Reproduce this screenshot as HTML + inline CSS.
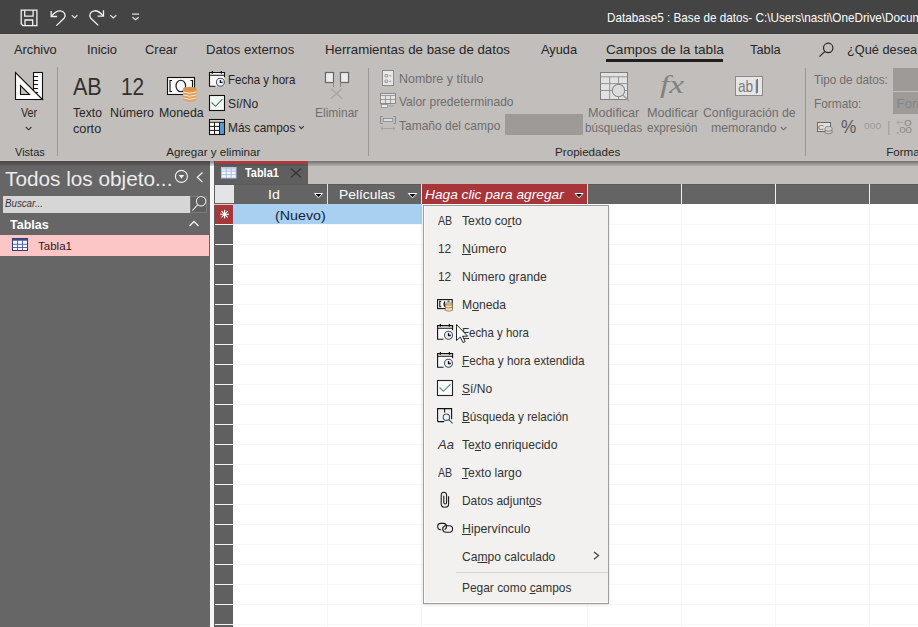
<!DOCTYPE html>
<html><head><meta charset="utf-8">
<style>
html,body{margin:0;padding:0;width:918px;height:627px;overflow:hidden;background:#ffffff;font-family:"Liberation Sans",sans-serif;}
.a{position:absolute;}
.t{position:absolute;white-space:nowrap;line-height:1;transform-origin:0 0;}
.t u{text-decoration:underline;text-decoration-thickness:1px;text-underline-offset:0.5px;}
svg{position:absolute;overflow:visible;}
</style></head><body>
<!-- title bar -->
<div class="a" style="left:0;top:0;width:918px;height:34px;background:#444444"></div>
<div class="a" style="left:0;top:33px;width:918px;height:1px;background:#3b3a38"></div>
<!-- ribbon -->
<div class="a" style="left:0;top:34px;width:918px;height:127px;background:#c2bebb"></div>
<div class="a" style="left:0;top:34px;width:918px;height:1px;background:#cbc8c5"></div>
<div class="a" style="left:606px;top:59px;width:117px;height:3px;background:#1f1f1f"></div>
<!-- ribbon separators -->
<div class="a" style="left:57px;top:67px;width:1px;height:89px;background:#9a9896"></div>
<div class="a" style="left:368px;top:68px;width:1px;height:88px;background:#9a9896"></div>
<div class="a" style="left:805px;top:68px;width:1px;height:88px;background:#9a9896"></div>
<div class="a" style="left:888px;top:121px;width:1px;height:14px;background:#a8a6a4"></div>
<!-- grey boxes -->
<div class="a" style="left:505px;top:114px;width:78px;height:21px;background:#9d9a98"></div>
<div class="a" style="left:893px;top:68px;width:25px;height:23px;background:#9d9a98"></div>
<div class="a" style="left:893px;top:92px;width:25px;height:22px;background:#9d9a98"></div>
<!-- ribbon bottom edge -->
<div class="a" style="left:0;top:160px;width:918px;height:1px;background:#c6c3c0"></div>

<!-- nav pane -->
<div class="a" style="left:0;top:161px;width:210px;height:466px;background:#666666"></div>
<div class="a" style="left:3px;top:196px;width:187px;height:17px;background:#d6d6d6"></div>
<div class="a" style="left:190px;top:196px;width:17px;height:17px;background:#606060;box-sizing:border-box;border:1px solid #7a7a7a"></div>
<div class="a" style="left:0;top:235px;width:209px;height:21px;background:#fcc6c6"></div>
<!-- strip -->
<div class="a" style="left:210px;top:161px;width:4px;height:466px;background:#f6f6f6"></div>
<div class="a" style="left:214px;top:161px;width:1px;height:466px;background:#606060"></div>
<!-- tab strip -->
<div class="a" style="left:215px;top:161px;width:703px;height:23px;background:#c2bebb"></div>
<div class="a" style="left:215px;top:161px;width:93px;height:23px;background:#5f5f5f"></div>
<div class="a" style="left:215px;top:161px;width:93px;height:3px;background:#a4373a"></div>

<!-- datasheet -->
<div class="a" style="left:215px;top:184px;width:703px;height:20px;background:#646464"></div>
<div class="a" style="left:215px;top:184px;width:703px;height:1px;background:#5a5a5a"></div>
<div class="a" style="left:215px;top:185px;width:19px;height:18px;background:#e4e4e6"></div>
<div class="a" style="left:422px;top:184px;width:165px;height:20px;background:#a8353a"></div>
<div class="a" style="left:327px;top:184px;width:1px;height:20px;background:#e0e0e0"></div>
<div class="a" style="left:421px;top:184px;width:1px;height:20px;background:#e0e0e0"></div>
<div class="a" style="left:587px;top:184px;width:1px;height:20px;background:#f4e4e4"></div>
<div class="a" style="left:681px;top:184px;width:1px;height:20px;background:#f0f0f0"></div>
<div class="a" style="left:775px;top:184px;width:1px;height:20px;background:#f0f0f0"></div>
<div class="a" style="left:869px;top:184px;width:1px;height:20px;background:#f0f0f0"></div>
<!-- row selectors -->
<div class="a" style="left:215px;top:205px;width:18px;height:422px;background:repeating-linear-gradient(to bottom,#606060 0,#606060 19px,#f4f4f4 19px,#f4f4f4 20px)"></div>
<div class="a" style="left:214px;top:204px;width:19px;height:1px;background:#e6c2c2"></div>
<div class="a" style="left:215px;top:205px;width:18px;height:19px;background:#a4373a"></div>
<!-- body grid -->
<div class="a" style="left:233px;top:205px;width:685px;height:422px;background:repeating-linear-gradient(to bottom,transparent 0,transparent 19px,#f7f7f7 19px,#f7f7f7 20px)"></div>
<div class="a" style="left:327px;top:204px;width:1px;height:423px;background:#f7f7f7"></div>
<div class="a" style="left:421px;top:204px;width:1px;height:423px;background:#f7f7f7"></div>
<div class="a" style="left:587px;top:204px;width:1px;height:423px;background:#f7f7f7"></div>
<div class="a" style="left:681px;top:204px;width:1px;height:423px;background:#f7f7f7"></div>
<div class="a" style="left:775px;top:204px;width:1px;height:423px;background:#f7f7f7"></div>
<div class="a" style="left:869px;top:204px;width:1px;height:423px;background:#f7f7f7"></div>
<div class="a" style="left:233px;top:204px;width:189px;height:20px;background:#a9cff1"></div>

<!-- menu -->
<div class="a" style="left:423px;top:205px;width:186px;height:399px;box-sizing:border-box;background:#f2f1f0;border:1px solid #9e9e9e;box-shadow:inset 1px -1px 0 #fafafa, 0 1px 3px rgba(0,0,0,0.12)"></div>
<div class="a" style="left:456px;top:572px;width:152px;height:1px;background:#d4d4d4"></div>

<div class="a" style="left:0;top:161px;width:918px;height:5px;background:linear-gradient(to bottom,rgba(50,45,42,0.55),rgba(50,45,42,0.1))"></div>
<div class="a" style="left:215px;top:161px;width:93px;height:3px;background:#ad3a3e"></div>
<svg style="left:0;top:0" width="918" height="627" viewBox="0 0 918 627" fill="none">
<!-- title bar icons -->
<g stroke="#f2f2f2" stroke-width="1.3" fill="none" stroke-linejoin="miter">
  <path d="M21.2,10.2 H36.9 V25.6 H23 L21.2,23.8 Z"/>
  <path d="M24.7,10.2 V16.2 H33.1 V10.2"/>
  <path d="M25,25.6 V20 H32.7 V25.6"/>
  <path d="M51.2,10.9 V16.5 H57.1"/>
  <path d="M51.6,16.1 C54.5,12.5 57,10.6 60.5,10.9 C64.5,11.3 66.2,15 64.3,18 L56.4,25.6"/>
  <path d="M103.5,10.2 V16.2 H97.6"/>
  <path d="M103.1,15.8 C100.2,12.3 97.7,10.5 94.3,10.8 C90.3,11.2 88.7,15 90.6,18 L98.3,25.4"/>
</g>
<g stroke="#e6e6e6" stroke-width="1.2" fill="none">
  <path d="M71.8,15.1 L74.6,17.9 L77.4,15.1"/>
  <path d="M110.2,15.1 L113.3,17.9 L116.4,15.1"/>
  <path d="M132.1,14.1 H139.1"/>
  <path d="M132.5,17.2 L135.6,19.8 L138.7,17.2"/>
</g>
<!-- search icon tab row -->
<g stroke="#262626" stroke-width="1.2" fill="none">
  <circle cx="828.2" cy="47.9" r="4.7"/>
  <path d="M824.9,51.3 L819.5,56.7"/>
</g>
<!-- Ver icon -->
<g stroke="#111" stroke-width="1.1" fill="#fafafa">
  <rect x="33.5" y="72.5" width="9" height="27"/>
  <path d="M33.5,76.5 H38 M33.5,80.5 H38 M33.5,84.5 H38 M33.5,88.5 H38 M33.5,92.5 H38"/>
  <path d="M15.5,72.5 V99.5 H42.5 Z"/>
  <path d="M20.5,85.5 V94.5 H29.5 Z" fill="#c2bebb"/>
</g>
<path d="M25.8,127 L28.6,129.8 L31.4,127" stroke="#333" stroke-width="1.1" fill="none"/>
<!-- Moneda icon -->
<g stroke="#111" stroke-width="1.1">
  <rect x="167.5" y="77.5" width="27" height="17" fill="#fafafa"/>
  <path d="M172,80.5 H170 V91.5 H172 M190.5,80.5 H192.5 V91.5 H190.5" fill="none"/>
  <ellipse cx="180.8" cy="86" rx="4.8" ry="5.8" fill="none"/>
</g>
<g>
  <rect x="183" y="89" width="13.6" height="10.5" fill="#e0a060"/>
  <ellipse cx="189.8" cy="99.5" rx="6.8" ry="2" fill="#e0a060"/>
  <ellipse cx="189.8" cy="89" rx="6.8" ry="2.3" fill="#d8944c"/>
  <path d="M183.3,92 Q189.8,94.6 196.3,92 M183.3,95 Q189.8,97.6 196.3,95 M183.3,98 Q189.8,100.6 196.3,98" stroke="#fbeede" stroke-width="0.9" fill="none"/>
</g>
<!-- Fecha y hora -->
<rect x="209.5" y="72.5" width="15" height="13.7" fill="#fafafa"/>
<path d="M215.4,86.2 H209.5 V72.5 H224.5 V77.2 M209.5,75.2 H224.5" stroke="#111" stroke-width="1.1" fill="none"/>
<path d="M212.3,70.9 V73.7 M221.3,70.9 V73.7" stroke="#111" stroke-width="1.2"/>
<circle cx="220.4" cy="82.2" r="4" fill="#eef4fb" stroke="#4a5260" stroke-width="1.1"/>
<path d="M220.4,79.9 V82.4 H222.7" stroke="#111" stroke-width="1.3" fill="none"/>
<!-- Si/No -->
<rect x="209.5" y="95.5" width="15" height="15" fill="#f2f9f5" stroke="#111" stroke-width="1.1"/>
<path d="M211.6,102.5 L215.4,106.3 L222.5,99.2" stroke="#4a7564" stroke-width="1.1" fill="none"/>
<!-- Mas campos -->
<rect x="209.5" y="119.5" width="15" height="15" fill="#fafafa"/>
<rect x="209.5" y="119.5" width="15" height="2.8" fill="#dcdcdc"/>
<rect x="219.5" y="122.3" width="5" height="12.2" fill="#5b9bd5"/>
<path d="M209.5,122.3 H224.5 M209.5,126.4 H219.5 M209.5,130.4 H219.5 M214.5,122.3 V134.5 M219.5,122.3 V134.5" stroke="#1a1a1a" stroke-width="1"/>
<rect x="209.5" y="119.5" width="15" height="15" fill="none" stroke="#111" stroke-width="1.1"/>
<path d="M299,126.2 L301.4,128.6 L303.8,126.2" stroke="#333" stroke-width="1.1" fill="none"/>
<!-- Eliminar -->
<g stroke="#666666" stroke-width="1.2" fill="#ececec">
  <rect x="325.5" y="72.5" width="8" height="10"/>
  <rect x="340.5" y="72.5" width="8" height="10"/>
</g>
<path d="M333.5,82 V87 M340.5,82 V87" stroke="#8a8a8a" stroke-width="1"/>
<path d="M331,88.5 L342,98.5 M342,88.5 L331,98.5" stroke="#a5a5a5" stroke-width="1.1"/>
<!-- Nombre y titulo -->
<rect x="382.5" y="70.5" width="11" height="15" fill="#e8e8e8" stroke="#8a8a8a" stroke-width="1"/>
<path d="M385,74.5 h2.5 v2.5 h-2.5 z M385,80 h2.5 v2.5 h-2.5 z M388.8,75.8 h2.6 M388.8,81.3 h2.6" stroke="#8a8a8a" stroke-width="0.8" fill="none"/>
<!-- Valor predeterminado -->
<rect x="380.5" y="93.5" width="15" height="10" fill="#e4e4e4" stroke="#8a8a8a" stroke-width="1"/>
<path d="M380.5,95.5 H395.5 M380.5,99.5 H395.5 M385.5,95.5 V103.5 M390.5,95.5 V103.5" stroke="#8a8a8a" stroke-width="0.8"/>
<rect x="381.5" y="104.5" width="6" height="3" fill="#ececec" stroke="#8a8a8a" stroke-width="0.8"/>
<path d="M389,106 H394" stroke="#9a9a9a" stroke-width="0.8"/>
<!-- Tamano del campo -->
<path d="M382.5,116.5 H380.5 V123.5 H382.5 M393.5,116.5 H395.5 V123.5 H393.5" stroke="#8a8a8a" stroke-width="1" fill="none"/>
<rect x="383.5" y="118.5" width="9" height="3" fill="#dcdcdc" stroke="#8a8a8a" stroke-width="0.8"/>
<path d="M381,128.5 H395 M383,126.8 L381,128.5 L383,130.2 M393,126.8 L395,128.5 L393,130.2" stroke="#9a9a9a" stroke-width="0.8" fill="none"/>
<!-- Modificar busquedas -->
<rect x="600.5" y="72.5" width="27" height="27" fill="#e2e2e2" stroke="#7f7f7f" stroke-width="1"/>
<path d="M600.5,76.8 H627.5 M600.5,83.6 H627.5 M600.5,90.5 H627.5 M609.7,76.8 V99.5 M618.5,76.8 V99.5" stroke="#8a8a8a" stroke-width="0.9"/>
<circle cx="618.5" cy="90.5" r="6.2" fill="#dcdcdc" stroke="#8a8a8a" stroke-width="1.1"/>
<path d="M622.8,95 L629,101" stroke="#9a9a9a" stroke-width="1.4"/>
<!-- abl -->
<rect x="735.5" y="76.5" width="27" height="19" fill="#e6e6e6" stroke="#8a8a8a" stroke-width="1"/>
<path d="M757.5,79 V93" stroke="#777" stroke-width="1"/>
<!-- Formato icons -->
<rect x="817.5" y="122.5" width="13" height="9" fill="#e0e0e0" stroke="#666" stroke-width="1"/>
<ellipse cx="828.5" cy="128" rx="3.5" ry="1.6" fill="#cfcfcf" stroke="#777" stroke-width="0.8"/>
<rect x="825" y="128" width="7" height="5" fill="#cfcfcf"/>
<path d="M825,128 V133 M832,128 V133 M825,130.5 Q828.5,132 832,130.5 M825,133 Q828.5,134.5 832,133" stroke="#777" stroke-width="0.8" fill="none"/>
<path d="M889,121 V135" stroke="#a8a6a4" stroke-width="1"/>
<!-- nav pane icons -->
<circle cx="181.4" cy="176.4" r="6" stroke="#f2f2f2" stroke-width="1.1" fill="none"/>
<path d="M178.6,175 H184.3 L181.45,178.4 Z" fill="#f2f2f2"/>
<path d="M202.5,172.5 L197.3,177.3 L202.5,182.1" stroke="#f2f2f2" stroke-width="1.2" fill="none"/>
<circle cx="201.1" cy="201.2" r="4.7" stroke="#e0e0e0" stroke-width="1.1" fill="none"/>
<path d="M197.8,204.6 L192.4,210.6" stroke="#e0e0e0" stroke-width="1.2"/>
<path d="M189.5,226 L194,221.5 L198.5,226" stroke="#f2f2f2" stroke-width="1.3" fill="none"/>
<!-- nav table icon -->
<rect x="12.5" y="238.5" width="15" height="12" fill="#f4f6ff" stroke="#2e3a6e" stroke-width="1"/>
<rect x="12.5" y="238.5" width="15" height="2.2" fill="#3a4a86"/>
<path d="M12.5,244.3 H27.5 M12.5,247.5 H27.5 M17.5,240.5 V250.5 M22.5,240.5 V250.5" stroke="#4a5aa0" stroke-width="0.9"/>
<!-- tab icon -->
<rect x="221.5" y="167.5" width="14.5" height="10.5" fill="#f4f6fc" stroke="#b4c2e6" stroke-width="1"/>
<rect x="221.5" y="167.5" width="14.5" height="2" fill="#c4d0ee"/>
<path d="M221.5,171.2 H236 M221.5,174.6 H236 M226.3,167.5 V178 M231.2,167.5 V178" stroke="#a8b8e0" stroke-width="0.9"/>
<path d="M291,168.5 L301,177.5 M301,168.5 L291,177.5" stroke="#333" stroke-width="1.1"/>
<!-- header triangles -->
<path d="M314.5,193.5 H322.5 L318.5,197.8 Z" fill="#111" stroke="#fff" stroke-width="1"/>
<path d="M408.3,193.5 H416.8 L412.5,197.8 Z" fill="#111" stroke="#fff" stroke-width="1"/>
<path d="M575,193.5 H583 L579,197.8 Z" fill="#111" stroke="#fff" stroke-width="1"/>
<!-- asterisk -->
<path d="M224.6,209.8 V218.6 M220.2,214.2 H229 M221.5,211.1 L227.7,217.3 M227.7,211.1 L221.5,217.3" stroke="#fff" stroke-width="1.1"/>
<!-- menu icons -->
<rect x="437.6" y="299.6" width="14.6" height="9" fill="#fafafa" stroke="#111" stroke-width="1.1"/>
<path d="M441.3,301.3 H439.8 V306.8 H441.3" stroke="#111" stroke-width="1.1" fill="none"/>
<path d="M445,301.3 Q443,304 445,306.8" stroke="#111" stroke-width="1.1" fill="none"/>
<path d="M447.5,301.2 H449.5" stroke="#111" stroke-width="1"/>
<rect x="445.4" y="303.8" width="7" height="7.2" fill="#f6e4bc"/>
<ellipse cx="448.9" cy="304" rx="3.5" ry="1.1" fill="#f6e4bc" stroke="#8f6c3a" stroke-width="0.9"/>
<path d="M445.4,304 V310.4 Q448.9,312 452.4,310.4 V304 M445.4,307.2 Q448.9,308.8 452.4,307.2" stroke="#8f6c3a" stroke-width="0.8" fill="none"/>
<!-- menu calendars -->
<rect x="437.6" y="325.6" width="15" height="13.7" fill="#fafafa"/>
<path d="M443.5,339.3 H437.6 V325.6 H452.6 V330.3 M437.6,328.3 H452.6" stroke="#111" stroke-width="1.1" fill="none"/>
<path d="M440.4,324.0 V326.8 M449.4,324.0 V326.8" stroke="#111" stroke-width="1.2"/>
<circle cx="448.5" cy="335.3" r="4" fill="#eef4fb" stroke="#4a5260" stroke-width="1.1"/>
<path d="M448.5,333.0 V335.5 H450.8" stroke="#111" stroke-width="1.3" fill="none"/>
<rect x="437.6" y="353.6" width="15" height="13.7" fill="#fafafa"/>
<path d="M443.5,367.3 H437.6 V353.6 H452.6 V358.3 M437.6,356.3 H452.6" stroke="#111" stroke-width="1.1" fill="none"/>
<path d="M440.4,352.0 V354.8 M449.4,352.0 V354.8" stroke="#111" stroke-width="1.2"/>
<circle cx="448.5" cy="363.3" r="4" fill="#eef4fb" stroke="#4a5260" stroke-width="1.1"/>
<path d="M448.5,361.0 V363.5 H450.8" stroke="#111" stroke-width="1.3" fill="none"/>
<rect x="437.5" y="380.5" width="15" height="15" fill="#fafafa" stroke="#222" stroke-width="1.1"/>
<path d="M439.6,387.5 L443.4,391.3 L450.5,384.2" stroke="#4f8e79" stroke-width="1.1" fill="none"/>
<!-- busqueda -->
<path d="M437.6,421.6 V408.6 H451.6 V419.2 M437.6,421.6 H444.2 M444.6,408.6 V412.6" stroke="#111" stroke-width="1.1" fill="none"/>
<circle cx="446.4" cy="417.2" r="3.2" fill="#eef3fa" stroke="#3e5570" stroke-width="1.1"/>
<path d="M448.8,419.6 L452.6,423.4" stroke="#3e5570" stroke-width="1.2"/>
<!-- clip -->
<path d="M448.6,496.2 V504 C448.6,508.4 441.2,508.4 441.2,504 V495.6 C441.2,491.2 446.6,491.2 446.6,495.6 V502.2 C446.6,504.6 443.8,504.6 443.8,502.2 V495.8" stroke="#1a1a1a" stroke-width="1.1" fill="none"/>
<!-- link -->
<path d="M441.2,529.8 H440.8 C436.6,529.8 436.6,523.4 440.8,523.4 H443.4 C447.2,523.4 447.4,528.6 444.6,529.6" stroke="#1a1a1a" stroke-width="1.1" fill="none"/>
<path d="M444.2,525.8 H449.4 C453.6,525.8 453.6,532.2 449.4,532.2 H446 C442,532.2 441.8,527 444.6,526.2" stroke="#1a1a1a" stroke-width="1.1" fill="none"/>
<!-- chevron right -->
<path d="M594,552 L598.5,555.6 L594,559.2" stroke="#333" stroke-width="1.1" fill="none"/>
<path d="M756.3,79.5 V93.5" stroke="#6a6a6a" stroke-width="1"/>
<path d="M780.8,127 L783.6,129.8 L786.4,127" stroke="#6e6e6e" stroke-width="1.1" fill="none"/>
<path d="M897,122.5 H903 M899,120.5 L897,122.5 L899,124.5" stroke="#a0a0a0" stroke-width="0.9" fill="none"/>
</svg>

<div class="t" style="left:606.60px;top:12.33px;font-size:12.6px;color:#ffffff;transform:scaleX(0.9304)">Database5 : Base de datos- C:\Users\nasti\OneDrive\Documentos\Database5.accdb (formato de archivo de Access 2007 - 2016) - Access</div>
<div class="t" style="left:14.30px;top:42.66px;font-size:13.4px;color:#262626;transform:scaleX(0.9562)">Archivo</div>
<div class="t" style="left:86.90px;top:42.66px;font-size:13.4px;color:#262626;transform:scaleX(0.9563)">Inicio</div>
<div class="t" style="left:145.00px;top:42.66px;font-size:13.4px;color:#262626;transform:scaleX(0.9646)">Crear</div>
<div class="t" style="left:206.10px;top:42.66px;font-size:13.4px;color:#262626;transform:scaleX(0.9793)">Datos externos</div>
<div class="t" style="left:325.10px;top:42.66px;font-size:13.4px;color:#262626;transform:scaleX(0.9896)">Herramientas de base de datos</div>
<div class="t" style="left:540.80px;top:42.66px;font-size:13.4px;color:#262626;transform:scaleX(0.9567)">Ayuda</div>
<div class="t" style="left:605.90px;top:42.66px;font-size:13.4px;color:#262626;transform:scaleX(1.0209)">Campos de la tabla</div>
<div class="t" style="left:749.60px;top:42.66px;font-size:13.4px;color:#262626;transform:scaleX(0.9589)">Tabla</div>
<div class="t" style="left:846.60px;top:42.66px;font-size:13.4px;color:#262626;transform:scaleX(0.9525)">¿Qué desea hacer?</div>
<div class="t" style="left:21.30px;top:105.83px;font-size:13.2px;color:#262626;transform:scaleX(0.8133)">Ver</div>
<div class="t" style="left:14.50px;top:145.98px;font-size:11.6px;color:#262626;transform:scaleX(0.9498)">Vistas</div>
<div class="t" style="left:72.80px;top:75.53px;font-size:23px;color:#303030;transform:scaleX(0.9352)">AB</div>
<div class="t" style="left:120.60px;top:75.53px;font-size:23px;color:#303030;transform:scaleX(0.9065)">12</div>
<div class="t" style="left:72.60px;top:105.83px;font-size:13.2px;color:#262626;transform:scaleX(0.9166)">Texto</div>
<div class="t" style="left:72.60px;top:121.83px;font-size:13.2px;color:#262626;transform:scaleX(0.9615)">corto</div>
<div class="t" style="left:110.10px;top:105.83px;font-size:13.2px;color:#262626;transform:scaleX(0.9380)">Número</div>
<div class="t" style="left:158.60px;top:105.83px;font-size:13.2px;color:#262626;transform:scaleX(0.9377)">Moneda</div>
<div class="t" style="left:228.00px;top:73.23px;font-size:13.2px;color:#262626;transform:scaleX(0.8744)">Fecha y hora</div>
<div class="t" style="left:228.00px;top:96.53px;font-size:13.2px;color:#262626;transform:scaleX(0.9126)">Sí/No</div>
<div class="t" style="left:228.30px;top:120.83px;font-size:13.2px;color:#262626;transform:scaleX(0.9015)">Más campos</div>
<div class="t" style="left:315.30px;top:105.83px;font-size:13.2px;color:#6e6e6e;transform:scaleX(0.9089)">Eliminar</div>
<div class="t" style="left:166.30px;top:145.98px;font-size:11.6px;color:#262626">Agregar y eliminar</div>
<div class="t" style="left:399.20px;top:71.83px;font-size:13.2px;color:#6e6e6e;transform:scaleX(0.9438)">Nombre y título</div>
<div class="t" style="left:399.20px;top:94.83px;font-size:13.2px;color:#6e6e6e;transform:scaleX(0.9099)">Valor predeterminado</div>
<div class="t" style="left:399.20px;top:118.83px;font-size:13.2px;color:#6e6e6e;transform:scaleX(0.9099)">Tamaño del campo</div>
<div class="t" style="left:588.40px;top:105.83px;font-size:13.2px;color:#6e6e6e;transform:scaleX(0.9589)">Modificar</div>
<div class="t" style="left:585.10px;top:121.33px;font-size:13.2px;color:#6e6e6e;transform:scaleX(0.8848)">búsquedas</div>
<div class="t" style="left:647.30px;top:105.83px;font-size:13.2px;color:#6e6e6e;transform:scaleX(0.9589)">Modificar</div>
<div class="t" style="left:647.30px;top:121.33px;font-size:13.2px;color:#6e6e6e;transform:scaleX(0.8831)">expresión</div>
<div class="t" style="left:703.20px;top:105.83px;font-size:13.2px;color:#6e6e6e;transform:scaleX(0.9286)">Configuración de</div>
<div class="t" style="left:711.40px;top:121.33px;font-size:13.2px;color:#6e6e6e;transform:scaleX(0.9336)">memorando</div>
<div class="t" style="left:555.10px;top:145.98px;font-size:11.6px;color:#262626">Propiedades</div>
<div class="t" style="left:814.40px;top:73.23px;font-size:13.2px;color:#6e6e6e;transform:scaleX(0.8882)">Tipo de datos:</div>
<div class="t" style="left:814.40px;top:97.23px;font-size:13.2px;color:#6e6e6e;transform:scaleX(0.8983)">Formato:</div>
<div class="t" style="left:886.20px;top:145.98px;font-size:11.6px;color:#262626">Formato</div>
<div class="t" style="left:896.60px;top:97.23px;font-size:13.2px;color:#858585">Formato</div>
<div class="t" style="left:5.40px;top:169.51px;font-size:19.6px;color:#ececec;transform:scaleX(1.0599)">Todos los objeto...</div>
<div class="t" style="left:4.80px;top:198.49px;font-size:11px;color:#333333;font-style:italic;transform:scaleX(0.8837)">Buscar...</div>
<div class="t" style="left:9.80px;top:218.87px;font-size:12.2px;color:#ffffff;font-weight:bold;transform:scaleX(1.0287)">Tablas</div>
<div class="t" style="left:38.40px;top:239.78px;font-size:11.6px;color:#2a1a1a;transform:scaleX(0.9950)">Tabla1</div>
<div class="t" style="left:245.00px;top:166.93px;font-size:12.6px;color:#ffffff;font-weight:bold;transform:scaleX(0.8674)">Tabla1</div>
<div class="t" style="left:267.50px;top:188.29px;font-size:13.6px;color:#ffffff;transform:scaleX(1.0402)">Id</div>
<div class="t" style="left:339.10px;top:188.29px;font-size:13.6px;color:#ffffff;transform:scaleX(1.0168)">Películas</div>
<div class="t" style="left:425.10px;top:188.49px;font-size:13.6px;color:#ffffff;font-style:italic;transform:scaleX(1.0085)">Haga clic para agregar</div>
<div class="t" style="left:275.10px;top:209.49px;font-size:13.6px;color:#14233a;transform:scaleX(1.0484)">(Nuevo)</div>
<div class="t" style="left:462.10px;top:213.91px;font-size:13.1px;color:#333333;transform:scaleX(0.9353)">Texto co<u>r</u>to</div>
<div class="t" style="left:462.10px;top:241.91px;font-size:13.1px;color:#333333;transform:scaleX(0.9511)"><u>N</u>úmero</div>
<div class="t" style="left:462.10px;top:269.91px;font-size:13.1px;color:#333333;transform:scaleX(0.9320)">Número <u>g</u>rande</div>
<div class="t" style="left:462.10px;top:297.91px;font-size:13.1px;color:#333333;transform:scaleX(0.9276)">M<u>o</u>neda</div>
<div class="t" style="left:462.10px;top:325.91px;font-size:13.1px;color:#333333;transform:scaleX(0.8754)"><u>F</u>echa y hora</div>
<div class="t" style="left:462.10px;top:353.91px;font-size:13.1px;color:#333333;transform:scaleX(0.8951)"><u>F</u>echa y hora extendida</div>
<div class="t" style="left:462.10px;top:381.91px;font-size:13.1px;color:#333333;transform:scaleX(0.9191)"><u>S</u>í/No</div>
<div class="t" style="left:462.10px;top:409.91px;font-size:13.1px;color:#333333;transform:scaleX(0.8959)"><u>B</u>úsqueda y relación</div>
<div class="t" style="left:462.10px;top:437.91px;font-size:13.1px;color:#333333;transform:scaleX(0.9295)">Te<u>x</u>to enriquecido</div>
<div class="t" style="left:462.10px;top:465.91px;font-size:13.1px;color:#333333;transform:scaleX(0.9319)"><u>T</u>exto largo</div>
<div class="t" style="left:462.10px;top:493.91px;font-size:13.1px;color:#333333;transform:scaleX(0.9112)">Datos adjunt<u>o</u>s</div>
<div class="t" style="left:462.10px;top:521.91px;font-size:13.1px;color:#333333;transform:scaleX(0.9398)"><u>H</u>ipervínculo</div>
<div class="t" style="left:462.10px;top:549.91px;font-size:13.1px;color:#333333;transform:scaleX(0.9222)">Ca<u>m</u>po calculado</div>
<div class="t" style="left:462.10px;top:580.61px;font-size:13.1px;color:#333333;transform:scaleX(0.9110)">Pegar como <u>c</u>ampos</div>
<div class="t" style="left:437.60px;top:213.91px;font-size:13.1px;color:#333;transform:scaleX(0.8129)">AB</div>
<div class="t" style="left:438.10px;top:241.91px;font-size:13.1px;color:#333;transform:scaleX(0.9055)">12</div>
<div class="t" style="left:438.10px;top:269.91px;font-size:13.1px;color:#333;transform:scaleX(0.9055)">12</div>
<div class="t" style="left:437.60px;top:437.91px;font-size:13.1px;color:#333;font-style:italic;transform:scaleX(0.9928)">Aa</div>
<div class="t" style="left:437.60px;top:465.91px;font-size:13.1px;color:#333;transform:scaleX(0.8129)">AB</div>
<div class="t" style="left:660.10px;top:72.34px;font-size:25px;color:#808080;font-style:italic;transform:scaleX(1.3314);font-family:'Liberation Serif',serif">fx</div>
<div class="t" style="left:737.60px;top:78.11px;font-size:17px;color:#7a7a7a;transform:scaleX(0.8033)">ab</div>
<div class="t" style="left:841.40px;top:117.96px;font-size:18px;color:#5a5a5a;transform:scaleX(0.9553)">%</div>
<div class="t" style="left:864.30px;top:122.08px;font-size:9px;color:#9c9c9c;transform:scaleX(1.1376)">000</div>
<div class="t" style="left:904.10px;top:118.88px;font-size:9px;color:#8a8a8a;transform:scaleX(1.5352)">0</div>
<div class="t" style="left:896.10px;top:126.18px;font-size:9px;color:#8a8a8a;transform:scaleX(1.2704)">,00</div>
<div class="t" style="left:818.40px;top:123.73px;font-size:8px;color:#555;transform:scaleX(1.0205)">C</div>
<svg style="left:0;top:0" width="918" height="627" viewBox="0 0 918 627" fill="none">
<path d="M456.5,324.5 V340.5 L460.3,337 L463,342.5 L465.2,341.5 L462.6,336.2 L467.6,336.2 Z" fill="#fff" stroke="#111" stroke-width="0.9" stroke-linejoin="round"/>
</svg>
</body></html>
